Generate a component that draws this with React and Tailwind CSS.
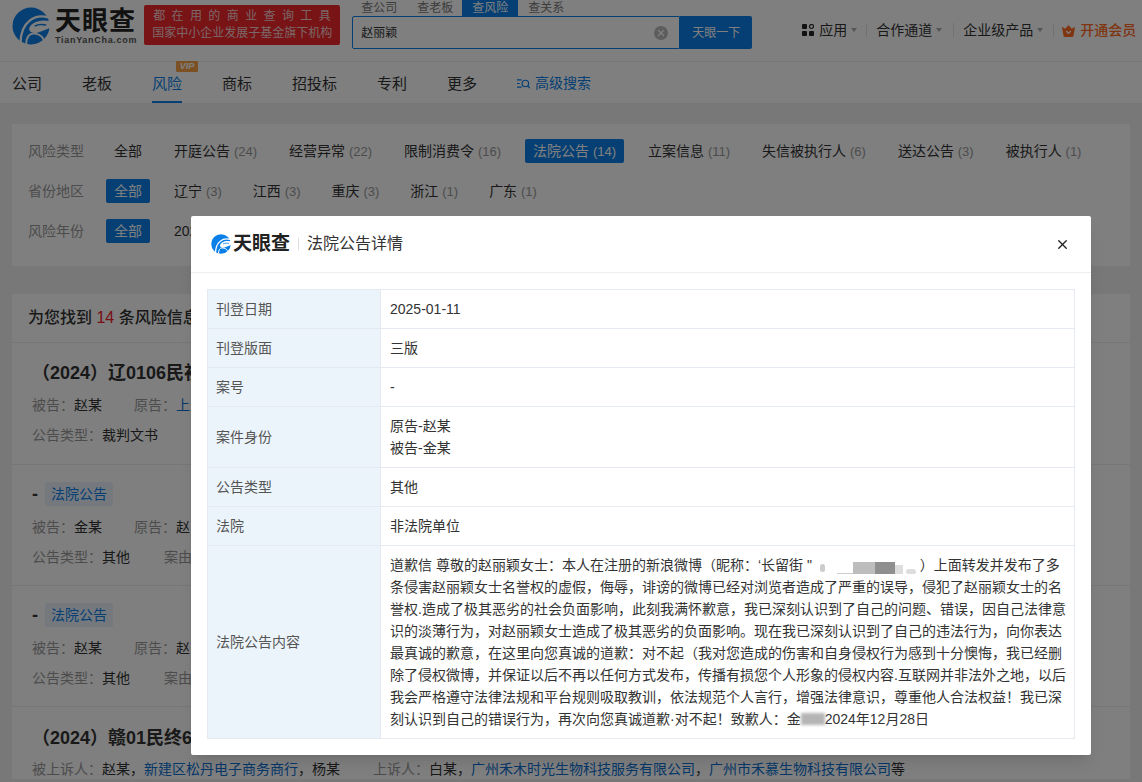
import { X } from 'lucide-react';

const typeFilters = [
  ['开庭公告', '(24)'], ['经营异常', '(22)'], ['限制消费令', '(16)'], ['法院公告', '(14)', true],
  ['立案信息', '(11)'], ['失信被执行人', '(6)'], ['送达公告', '(3)'], ['被执行人', '(1)'],
];
const regions = [['辽宁', '(3)'], ['江西', '(3)'], ['重庆', '(3)'], ['浙江', '(1)'], ['广东', '(1)']];
const tabs = ['公司', '老板', '风险', '商标', '招投标', '专利', '更多'];

function Logo({ className, fill }) {
  return (
    <svg viewBox="0 0 40 40" className={className}>
      <circle cx="20" cy="20" r="19.5" fill={fill} />
      <path d="M38 11C25 7 9 15 9 38" fill="none" stroke="#fff" strokeWidth="2.4" />
      <path d="M40 15C29 12 19 17 18 23c0 4 5 5 9 4l13-5z" fill="#fff" />
      <path d="M15 39c0-8 4-12 9-11 7 1 10 5 9 9" fill="none" stroke="#fff" strokeWidth="2" />
      <path d="M24 20c4-2 8-2 12-1" fill="none" stroke={fill} strokeWidth="1.600" />
    </svg>
  );
}

function Caret() {
  return <span className="w-0 h-0 border-x-[3.5px] border-x-transparent border-t-[4px] border-t-[#aaa] ml-1" />;
}

function Field({ label, value, blue, className = '' }) {
  return (
    <span className={`whitespace-nowrap ${className}`}>
      <span className="text-[#999]">{label}：</span>
      <span className={blue ? 'text-[#0a6fd0]' : 'text-[#333]'}>{value}</span>
    </span>
  );
}

function Tag() {
  return (
    <div className="flex items-center h-[24px] text-[14px]">
      <span className="font-bold text-[#333] w-[13px] text-[18px]">-</span>
      <span className="bg-[#eaf3fd] text-[#0a7fe8] px-[6px] h-[24px] leading-[24px] rounded-[2px]">法院公告</span>
    </div>
  );
}

function Row({ label, children, h }) {
  return (
    <div className={`flex border-b border-[#e4eaf0] last:border-b-0 ${h}`}>
      <div className="w-[173px] shrink-0 bg-[#ecf4fb] border-r border-[#e4eaf0] pl-[8px] flex items-center text-[#555]">{label}</div>
      <div className="flex-1 pl-[9px] pr-[6px] flex flex-col justify-center text-[#333] leading-[22px]">{children}</div>
    </div>
  );
}

// the mosaic over the nickname in the notice
function NickBlur() {
  return (
    <span className="inline-flex items-end w-[104px] h-[13px] align-[-2px] blur-[0.6px]">
      <span className="w-[5px] h-[8px] ml-[4px] mb-[2px] bg-[#ccc] rounded-full" />
      <span className="w-[16px] h-[1px] ml-[12px] bg-[#ccc]" />
      <span className="w-[22px] h-[12px] bg-[#bdbdbd]" />
      <span className="w-[20px] h-[12px] bg-[#8f8f8f]" />
      <span className="w-[8px] h-[9px] bg-[#ddd]" />
      <span className="w-[10px] h-[5px] ml-[3px] bg-[#ddd] rounded-full" />
    </span>
  );
}

export default function App() {
  return (
    <div className="relative h-[782px] w-[1142px] overflow-hidden bg-[#f0f0f0] font-['Liberation_Sans','Noto_Sans_CJK_SC',sans-serif] text-[14px] text-[#333]">
      {/* top bar */}
      <header className="h-[62px] bg-white flex items-start border-b border-[#eee]">
        <div className="flex items-center ml-[12px] mt-[7px]">
          <Logo className="w-[38px] h-[38px]" fill="#0a7fe8" />
          <div className="ml-[5px] flex flex-col">
            <span className="text-[26px] leading-[28px] font-bold tracking-[1px] text-[#222]">天眼查</span>
            <span className="text-[9px] leading-[10px] font-bold tracking-[0.7px] text-[#555]">TianYanCha.com</span>
          </div>
        </div>
        <div className="ml-[7px] mt-[5px] w-[196px] h-[40px] bg-[#f0262c] rounded-[2px] text-[#f6cfcf] text-[12px] leading-[17px] pt-[3px] text-center">
          <div className="tracking-[6.4px] ml-[6px]">都在用的商业查询工具</div>
          <div>国家中小企业发展子基金旗下机构</div>
        </div>
        <div className="ml-[12px] w-[400px]">
          <div className="flex h-[16px] text-[12px] leading-[16px] text-[#777]">
            <span className="ml-[9px]">查公司</span>
            <span className="ml-[20px]">查老板</span>
            <span className="ml-[9px] px-[10px] bg-[#0a7fe8] text-white">查风险</span>
            <span className="ml-[10px]">查关系</span>
          </div>
          <div className="flex h-[33px]">
            <div className="w-[329px] border border-[#0a7fe8] rounded-l-[2px] flex items-center justify-between pl-[8px] pr-[11px] text-[12px]">
              <span>赵丽颖</span>
              <span className="w-[14px] h-[14px] rounded-full bg-[#bbb] flex items-center justify-center">
                <X size={10} color="#fff" strokeWidth={3} />
              </span>
            </div>
            <div className="w-[72px] bg-[#0a7fe8] rounded-r-[2px] flex items-center justify-center text-white text-[12px]">天眼一下</div>
          </div>
        </div>
        <div className="ml-[50px] mt-[21px] flex items-center h-[18px] whitespace-nowrap">
          <svg viewBox="0 0 12 12" className="w-[12px] h-[12px] mr-[5px]" fill="#222">
            <rect x="0" y="0" width="5" height="5" rx="1" /><circle cx="9.5" cy="2.5" r="2" fill="none" stroke="#222" strokeWidth="1.2" />
            <rect x="0" y="7" width="5" height="5" rx="1" /><rect x="7" y="7" width="5" height="5" rx="1" />
          </svg>
          <span>应用</span><Caret />
          <span className="w-px h-[14px] bg-[#e5e5e5] ml-[9px] mr-[9px]" />
          <span>合作通道</span><Caret />
          <span className="w-px h-[14px] bg-[#e5e5e5] ml-[11px] mr-[9px]" />
          <span>企业级产品</span><Caret />
          <span className="w-px h-[14px] bg-[#e5e5e5] ml-[10px] mr-[8px]" />
          <svg viewBox="0 0 14 14" className="w-[13px] h-[13px] mr-[5px]" fill="#ff6a1f">
            <path d="M0 3l3.5 2L7 1l3.5 4L14 3l-1.5 9a2 2 0 0 1-2 2h-7a2 2 0 0 1-2-2z" />
            <path d="M4.5 7.5L7 10l2.500-2.500" fill="none" stroke="#fff" strokeWidth="1.300" />
          </svg>
          <span className="text-[#ff6a1f] font-medium">开通会员</span>
        </div>
      </header>

      {/* tab bar */}
      <nav className="h-[41px] bg-white flex items-center pl-[12px] gap-[40px] text-[15px] relative">
        {tabs.map(t => (
          <span key={t} className={`relative h-[41px] leading-[44px] whitespace-nowrap ${t === '风险' ? 'text-[#0a7fe8]' : 'text-[#333]'}`}>
            {t}
            {t === '风险' && (
              <>
                <span className="absolute left-0 right-0 bottom-0 h-[2px] bg-[#0a7fe8]" />
                <span className="absolute -top-[1px] left-[24px] w-[22px] h-[11px] bg-[#f7a348] rounded-[1px] text-white text-[9px] leading-[11px] italic font-bold text-center">VIP</span>
              </>
            )}
          </span>
        ))}
        <span className="flex items-center text-[#0a7fe8] text-[14px] pt-[2px]">
          <svg viewBox="0 0 14 14" className="w-[13px] h-[13px] mr-[5px]" fill="none" stroke="#0a7fe8" strokeWidth="1.300">
            <path d="M0 3h5M0 7h3M0 11h5" />
            <circle cx="9" cy="7" r="3.500" />
            <path d="M11.500 9.500L14 12" />
          </svg>
          高级搜索
        </span>
      </nav>

      <main className="px-[12px] pt-[21px]">
        {/* filters */}
        <section className="h-[142px] bg-white pl-[16px] pt-[15px]">
          <div className="flex items-center h-[24px] whitespace-nowrap">
            <span className="w-[78px] text-[#999]">风险类型</span>
            <span className="w-[68px] pl-[8px] shrink-0">全部</span>
            <div className="flex items-center">
              {typeFilters.map(([n, c, on]) => (
                <span key={n} className={on ? 'bg-[#0a7fe8] text-white rounded-[2px] h-[24px] leading-[24px] px-[8px] mr-[24px] -ml-[8px]' : 'mr-[32px]'}>
                  {n} <span className={`text-[13px] ${on ? 'text-white' : 'text-[#999]'}`}>{c}</span>
                </span>
              ))}
            </div>
          </div>
          <div className="flex items-center h-[24px] mt-[16px] whitespace-nowrap">
            <span className="w-[78px] text-[#999]">省份地区</span>
            <span className="w-[44px] h-[24px] leading-[24px] text-center bg-[#0a7fe8] text-white rounded-[2px] mr-[24px]">全部</span>
            {regions.map(([n, c]) => (
              <span key={n} className="mr-[31px]">{n} <span className="text-[13px] text-[#999]">{c}</span></span>
            ))}
          </div>
          <div className="flex items-center h-[24px] mt-[16px] whitespace-nowrap">
            <span className="w-[78px] text-[#999]">风险年份</span>
            <span className="w-[44px] h-[24px] leading-[24px] text-center bg-[#0a7fe8] text-white rounded-[2px] mr-[24px]">全部</span>
            <span>2025</span>
          </div>
        </section>

        {/* results */}
        <section className="mt-[28px] bg-white">
          <div className="h-[49px] border-b border-[#eee] pl-[16px] flex items-center text-[16px] font-medium">
            为您找到&nbsp;<span className="text-[#f0202a]">14</span>&nbsp;条风险信息
          </div>

          <div className="h-[122px] border-b border-[#eee] pl-[20px] pt-[17px]">
            <div className="text-[18px] leading-[26px] font-bold whitespace-nowrap">（2024）辽0106民初</div>
            <div className="mt-[9px] h-[20px] flex"><Field label="被告" value="赵某" className="w-[102px]" /><Field label="原告" value="上" blue /></div>
            <div className="mt-[10px] h-[20px]"><Field label="公告类型" value="裁判文书" /></div>
          </div>

          <div className="h-[121px] border-b border-[#eee] pl-[20px] pt-[17px]">
            <Tag />
            <div className="mt-[11px] h-[20px] flex"><Field label="被告" value="金某" className="w-[102px]" /><Field label="原告" value="赵" /></div>
            <div className="mt-[10px] h-[20px] flex"><Field label="公告类型" value="其他" className="w-[132px]" /><span className="text-[#999]">案由</span></div>
          </div>

          <div className="h-[121px] border-b border-[#eee] pl-[20px] pt-[17px]">
            <Tag />
            <div className="mt-[11px] h-[20px] flex"><Field label="被告" value="赵某" className="w-[102px]" /><Field label="原告" value="赵" /></div>
            <div className="mt-[10px] h-[20px] flex"><Field label="公告类型" value="其他" className="w-[132px]" /><span className="text-[#999]">案由</span></div>
          </div>

          <div className="pl-[20px] pt-[18px]">
            <div className="text-[18px] leading-[26px] font-bold whitespace-nowrap">（2024）赣01民终6</div>
            <div className="mt-[8px] h-[20px] flex whitespace-nowrap">
              <span className="text-[#999]">被上诉人：</span>
              <span>赵某，</span><span className="text-[#0a6fd0]">新建区松丹电子商务商行</span><span>，杨某</span>
              <span className="text-[#999] ml-[33px]">上诉人：</span>
              <span>白某，</span><span className="text-[#0a6fd0]">广州禾木时光生物科技服务有限公司</span><span>，</span>
              <span className="text-[#0a6fd0]">广州市禾慕生物科技有限公司</span><span>等</span>
            </div>
          </div>
        </section>
      </main>

      {/* dialog */}
      <div className="absolute inset-0 bg-black/50">
        <div className="absolute left-[191px] top-[216px] w-[900px] h-[539px] bg-white rounded-[2px] shadow-lg">
          <div className="h-[57px] border-b border-[#eee] flex items-center pl-[20px] pr-[21px]">
            <Logo className="w-[20px] h-[20px]" fill="#0a7fe8" />
            <span className="ml-[2px] text-[19px] font-bold text-[#222]">天眼查</span>
            <span className="w-px h-[12px] bg-[#ddd] mx-[8px]" />
            <span className="text-[16px] text-[#333]">法院公告详情</span>
            <X size={15} strokeWidth={2.2} className="ml-auto text-[#222]" />
          </div>
          <div className="mx-[16px] mt-[16px] border border-[#e4eaf0]">
            <Row label="刊登日期" h="h-[39px]">2025-01-11</Row>
            <Row label="刊登版面" h="h-[39px]">三版</Row>
            <Row label="案号" h="h-[39px]">-</Row>
            <Row label="案件身份" h="h-[61px]">
              <div>原告-赵某</div>
              <div>被告-金某</div>
            </Row>
            <Row label="公告类型" h="h-[39px]">其他</Row>
            <Row label="法院" h="h-[39px]">非法院单位</Row>
            <Row label="法院公告内容" h="h-[192px]">
              <p>
                道歉信 尊敬的赵丽颖女士：本人在注册的新浪微博（昵称：‘长留街 " <NickBlur />）上面转发并发布了多条侵害赵丽颖女士名誉权的虚假，侮辱，诽谤的微博已经对浏览者造成了严重的误导，侵犯了赵丽颖女士的名誉权.造成了极其恶劣的社会负面影响，此刻我满怀歉意，我已深刻认识到了自己的问题、错误，因自己法律意识的淡薄行为，对赵丽颖女士造成了极其恶劣的负面影响。现在我已深刻认识到了自己的违法行为，向你表达最真诚的歉意，在这里向您真诚的道歉：对不起（我对您造成的伤害和自身侵权行为感到十分懊悔，我已经删除了侵权微博，并保证以后不再以任何方式发布，传播有损您个人形象的侵权内容.互联网并非法外之地，以后我会严格遵守法律法规和平台规则吸取教训，依法规范个人言行，增强法律意识，尊重他人合法权益！我已深刻认识到自己的错误行为，再次向您真诚道歉·对不起！致歉人：金<span className="inline-block w-[24px] h-[12px] align-[-1px] bg-[#b5b5b5] blur-[1.5px]" />2024年12月28日
              </p>
            </Row>
          </div>
        </div>
      </div>
    </div>
  );
}
